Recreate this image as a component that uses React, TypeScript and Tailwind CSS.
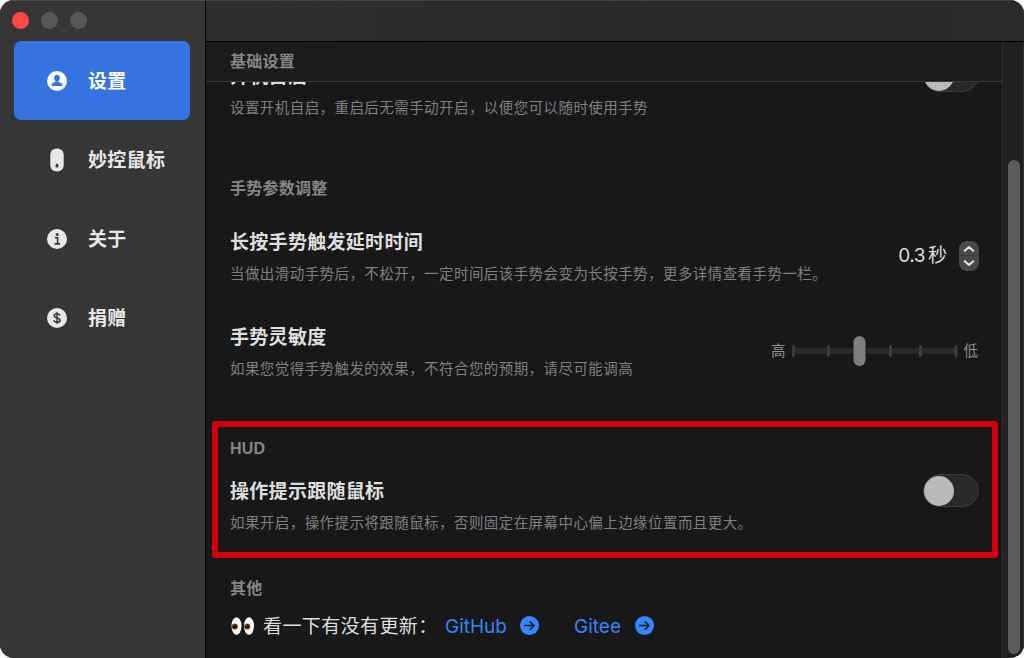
import type { ReactNode } from 'react';

function PersonIcon() {
  return (
    <svg viewBox="0 0 20 20" className="size-5">
      <circle cx="10" cy="10" r="10" fill="#fff" />
      <path d="M10 3.700c1.700 0 2.900 1.300 2.900 3.100 0 1.300-.6 2.300-1.300 2.900v.8c.3.500 3.900.9 3.900 3.500 0 .6-.3 1-.8 1H5.300c-.5 0-.8-.4-.8-1 0-2.600 3.600-3 3.900-3.500v-.8c-.7-.6-1.300-1.600-1.300-2.900 0-1.800 1.200-3.100 2.900-3.100z" fill="#3574e0" />
      <path d="M5.200 13.400c.9-1.800 3.100-1.700 3.500-2.800.8.500 1.800.5 2.600 0 .4 1.100 2.600 1 3.500 2.800" stroke="#fff" strokeWidth=".3" fill="none" />
    </svg>
  );
}

function MouseIcon() {
  return (
    <svg viewBox="0 0 20 24" className="h-6 w-5">
      <rect x="3.300" y=".5" width="13.400" height="23" rx="6.200" fill="#e8e8e8" />
      <path d="M10 15c.3 1 1.600 1.600 1.600 2.900a1.600 1.600 0 0 1-3.200 0c0-.8.8-1.100.900-1.700.1-.5.300-.9.700-1.200z" fill="#363636" />
    </svg>
  );
}

function InfoIcon() {
  return (
    <svg viewBox="0 0 20 20" className="size-5">
      <circle cx="10" cy="10" r="10" fill="#e8e8e8" />
      <circle cx="10.100" cy="5.500" r="1.500" fill="#363636" />
      <path d="M8 8.800h2.600v5.800M7.500 14.900h5.600" stroke="#363636" strokeWidth="1.600" fill="none" />
    </svg>
  );
}

function DollarIcon() {
  return (
    <svg viewBox="0 0 20 20" className="size-5">
      <circle cx="10" cy="10" r="10" fill="#e8e8e8" />
      <path d="M12.900 7.700c-.2-1.100-1.300-1.900-2.900-1.900-1.700 0-2.800.8-2.800 2 0 1.300 1.200 1.700 2.800 2.100 1.700.4 3.100.8 3.100 2.300 0 1.200-1.200 2.100-3.100 2.100-1.800 0-3-.9-3.100-2.100M10 4.300v11.400" stroke="#363636" strokeWidth="1.500" fill="none" />
    </svg>
  );
}

function ArrowCircle() {
  return (
    <svg viewBox="0 0 19 19" className="mb-px size-[19px]">
      <circle cx="9.500" cy="9.500" r="9.500" fill="#3586fc" />
      <path d="M4.800 9.600h9M10.200 5.900l3.800 3.700-3.800 3.700" stroke="#181818" strokeWidth="1.500" strokeLinecap="round" strokeLinejoin="round" fill="none" />
    </svg>
  );
}

function Eyes() {
  return (
    <svg viewBox="0 0 24 18" className="h-[18px] w-6" role="img">
      <ellipse cx="6.500" cy="9" rx="5" ry="8.700" fill="#fff" />
      <ellipse cx="19" cy="9" rx="5" ry="8.700" fill="#fff" />
      <circle cx="4.800" cy="9.500" r="3.100" fill="#804d18" />
      <circle cx="17.300" cy="9.500" r="3.100" fill="#804d18" />
      <circle cx="4.700" cy="9.500" r="2.100" fill="#160b04" />
      <circle cx="17.200" cy="9.500" r="2.100" fill="#160b04" />
      <circle cx="3.800" cy="8.600" r=".6" fill="#c99a60" />
      <circle cx="16.300" cy="8.600" r=".6" fill="#c99a60" />
    </svg>
  );
}

function NavItem({ icon, label, active }: { icon: ReactNode; label: string; active?: boolean }) {
  return (
    <div
      className={
        'flex h-[79px] items-center rounded-[7px] pl-[33px] text-[19px] font-bold tracking-[0.3px] ' +
        (active ? 'bg-[#3574e0] text-white' : 'text-[#e8e8e8]')
      }
    >
      <span className="flex w-[41px] items-center">{icon}</span>
      <span className="pt-[3px]">{label}</span>
    </div>
  );
}

function Toggle() {
  return (
    <div className="flex h-[33px] w-14 items-center rounded-full border border-[#3d3d3d] bg-[#292929]">
      <div className="size-[30px] rounded-full bg-[#bababa]" />
    </div>
  );
}

function Heading({ children }: { children: ReactNode }) {
  return <h2 className="h-8 text-[16px] leading-[34px] font-bold tracking-[0.25px] text-[#858585]">{children}</h2>;
}

function Setting({ title, desc, children, top }: { title: string; desc: string; children: ReactNode; top?: boolean }) {
  return (
    <div className={'flex h-16 justify-between ' + (top ? 'items-start' : 'items-center')}>
      <div>
        <h3 className="h-8 text-[19px] leading-[35px] font-bold tracking-[0.3px] text-[#dedede]">{title}</h3>
        <p className="h-8 text-[14.5px] leading-[34px] tracking-[0.43px] text-[#7f7f83]">{desc}</p>
      </div>
      {children}
    </div>
  );
}

function Stepper() {
  return (
    <div className="flex items-center pb-0.5">
      <span className="mr-3 flex items-baseline pt-px text-[19px] text-[#dedede]">
        <span className="mr-[3px] font-['Inter'] text-[19px] tracking-[-0.5px]">0.3</span>秒
      </span>
      <svg viewBox="0 0 20 30" className="h-[30px] w-5">
        <rect width="20" height="30" rx="8" fill="#484848" />
        <path d="M0 14.500h20" stroke="#393939" />
        <path d="M5.800 9.800L10 6l4.200 3.800M5.800 20.200L10 24l4.200-3.800" stroke="#e4e4e4" strokeWidth="2" strokeLinecap="round" strokeLinejoin="round" fill="none" />
      </svg>
    </div>
  );
}

function Slider() {
  return (
    <div className="flex items-center pr-px pb-0.5 text-[14.500px] text-[#8e8e8e]">
      <span className="pt-0.5">高</span>
      <svg viewBox="0 0 168 30" className="mr-[5px] ml-[5px] h-[30px] w-[168px]">
        <rect x="2" y="12" width="163" height="6" fill="#292929" />
        {[2.500, 37.500, 99.500, 129.500, 165].map((x) => (
          <rect key={x} x={x - 1.500} y="9" width="3" height="12" rx="1.500" fill="#3d3d3d" />
        ))}
        <rect x="62.500" y="0" width="12" height="30" rx="6" fill="#7d7d7d" />
      </svg>
      <span className="pt-0.5">低</span>
    </div>
  );
}

export default function App() {
  return (
    <div className="h-[658px] w-[1024px] bg-white font-['Liberation_Sans','Noto_Sans_CJK_SC',sans-serif]">
      <div className="flex h-full overflow-hidden rounded-[14px] bg-[#181818]">
        <aside className="w-[206px] shrink-0 border-t border-r border-t-[#4b4b4b] border-r-black bg-[#363636]">
          <div className="flex h-10 gap-3 pt-[11px] pl-3">
            <span className="size-[17px] rounded-full bg-[#ff4747]" />
            <span className="size-[17px] rounded-full bg-[#575757]" />
            <span className="size-[17px] rounded-full bg-[#575757]" />
          </div>
          <nav className="pr-[15px] pl-[14px]">
            <NavItem icon={<PersonIcon />} label="设置" active />
            <NavItem icon={<MouseIcon />} label="妙控鼠标" />
            <NavItem icon={<InfoIcon />} label="关于" />
            <NavItem icon={<DollarIcon />} label="捐赠" />
          </nav>
        </aside>
        <main className="flex min-w-0 flex-1 flex-col">
          <div className="h-[42px] shrink-0 border-t border-b border-t-[#444] border-b-black bg-gradient-to-r from-[#2d2f2d] via-[#292929] to-[#2a2a28]" />
          <div className="flex min-h-0 flex-1">
            <div className="flex min-w-0 flex-1 flex-col">
              <div className="h-10 shrink-0 border-b border-[#3a3a3a] bg-[#1b1b1b] pt-[3px] pl-6">
                <Heading>基础设置</Heading>
              </div>
              <div className="min-h-0 flex-1 overflow-hidden pr-[23px] pl-6">
                <div className="-mt-[23px]">
                  <Setting title="开机自启" desc="设置开机自启，重启后无需手动开启，以便您可以随时使用手势" top>
                    <Toggle />
                  </Setting>
                </div>
                <section className="mt-[49px]">
                  <Heading>手势参数调整</Heading>
                  <div className="mt-[21px]">
                    <Setting title="长按手势触发延时时间" desc="当做出滑动手势后，不松开，一定时间后该手势会变为长按手势，更多详情查看手势一栏。">
                      <Stepper />
                    </Setting>
                  </div>
                  <div className="mt-[31px]">
                    <Setting title="手势灵敏度" desc="如果您觉得手势触发的效果，不符合您的预期，请尽可能调高">
                      <Slider />
                    </Setting>
                  </div>
                </section>
                <section className="relative mt-12">
                  <div className="absolute -top-[11px] -right-[19px] -left-[18px] h-[137px] rounded-[3px] border-6 border-[#d0000e]" />
                  <Heading>HUD</Heading>
                  <div className="mt-[10px]">
                    <Setting title="操作提示跟随鼠标" desc="如果开启，操作提示将跟随鼠标，否则固定在屏幕中心偏上边缘位置而且更大。" top>
                      <Toggle />
                    </Setting>
                  </div>
                </section>
                <section className="mt-[34px]">
                  <Heading>其他</Heading>
                  <div className="mt-[6px] flex h-8 items-center text-[19px] text-[#dedede]">
                    <Eyes />
                    <span className="ml-[9px] w-[182px] pt-0.5 tracking-[0.4px] whitespace-nowrap">看一下有没有更新：</span>
                    <a className="flex w-[129px] items-center font-['Inter'] text-[#3586fc]">
                      <span className="w-[75px] pt-0.5">GitHub</span>
                      <ArrowCircle />
                    </a>
                    <a className="flex items-center font-['Inter'] text-[#3586fc]">
                      <span className="w-[61px] pt-0.5">Gitee</span>
                      <ArrowCircle />
                    </a>
                  </div>
                </section>
              </div>
            </div>
            <div className="w-[22px] shrink-0 border-r border-l border-r-[#343330] border-l-[#303030] bg-[#202020] pt-[118px] pl-[5px]">
              <div className="h-[494px] w-3 rounded-full bg-[#5a5a5a]" />
            </div>
          </div>
        </main>
      </div>
    </div>
  );
}
